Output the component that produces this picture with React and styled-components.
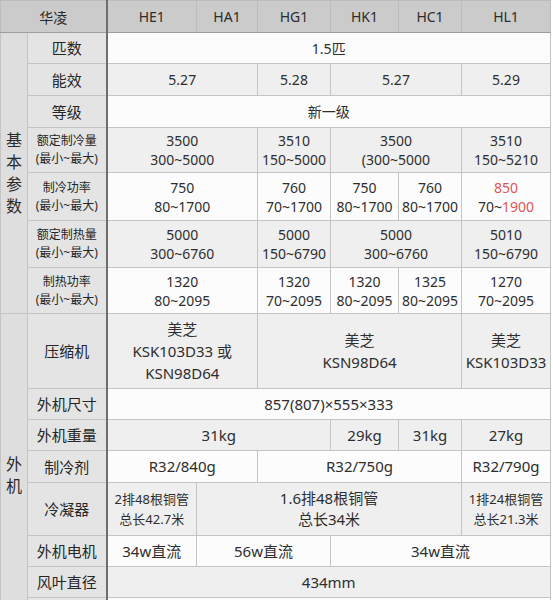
import React from 'react';
import styled, {createGlobalStyle} from 'styled-components';

const GlobalStyle = createGlobalStyle`
  html, body {
    margin: 0;
    padding: 0;
    background: #ffffff;
    overflow: hidden;
  }
  body {
    font-family: "Noto Sans", "Noto Sans CJK SC", sans-serif;
    color: #2a2a2a;
  }
`;

const SpecTable = styled.table`
  border-collapse: collapse;
  table-layout: fixed;
  width: 551px;
  border-right: 1px solid #b9b9b9;
`;

const HeadCell = styled.th`
  background: #cbcbcb;
  font-weight: 400;
  font-size: 14px;
  color: #2c2c2c;
  text-align: center;
  border: 1px solid #bdbdbd;
  border-bottom: 1px solid #9d9d9d;
  border-right: ${p => p.$divider ? '2px solid #6e6e6e' : '1px solid #bdbdbd'};
  padding: 0;
`;

const GroupCell = styled.td`
  background: #dedede;
  border: 1px solid #c4c4c4;
  font-size: 16px;
  line-height: 22px;
  text-align: center;
  vertical-align: middle;
  padding: 0 5px;
  color: #2a2a2a;
`;

const LabelCell = styled.td`
  background: #e4e4e4;
  border: 1px solid #c4c4c4;
  border-right: 2px solid #6e6e6e;
  text-align: center;
  font-size: ${p => p.$small ? '12px' : '15px'};
  line-height: ${p => p.$small ? '18px' : '20px'};
  padding: 0;
  color: #262626;
`;

const DataCell = styled.td`
  background: ${p => p.$shade ? '#efefef' : '#fcfcfc'};
  border: 1px solid #c4c4c4;
  text-align: center;
  font-size: ${p => p.$size || 14}px;
  line-height: ${p => p.$lh || 19}px;
  padding: 0;
  color: #2e2e2e;
`;

const Red = styled.span`
  color: #e25555;
`;

const cols = [27, 79, 90, 61, 73, 68, 63, 89];
const models = ['HE1', 'HA1', 'HG1', 'HK1', 'HC1', 'HL1'];

const pair = (a, b) => <>{a}<br/>{b}</>;

const basicRows = [
    {label: '匹数', h: 31, cells: [{t: '1.5匹', s: 6}]},
    {label: '能效', h: 32, cells: [{t: '5.27', s: 2}, {t: '5.28'}, {t: '5.27', s: 2}, {t: '5.29'}]},
    {label: '等级', h: 32, cells: [{t: '新一级', s: 6}]},
    {label: pair('额定制冷量', '(最小~最大)'), small: true, h: 45, cells: [
        {t: pair('3500', '300~5000'), s: 2}, {t: pair('3510', '150~5000')},
        {t: pair('3500', '(300~5000'), s: 2}, {t: pair('3510', '150~5210')}]},
    {label: pair('制冷功率', '(最小~最大)'), small: true, h: 48, cells: [
        {t: pair('750', '80~1700'), s: 2}, {t: pair('760', '70~1700')}, {t: pair('750', '80~1700')},
        {t: pair('760', '80~1700')}, {t: pair(<Red>850</Red>, <>70~<Red>1900</Red></>)}]},
    {label: pair('额定制热量', '(最小~最大)'), small: true, h: 47, cells: [
        {t: pair('5000', '300~6760'), s: 2}, {t: pair('5000', '150~6790')},
        {t: pair('5000', '300~6760'), s: 2}, {t: pair('5010', '150~6790')}]},
    {label: pair('制热功率', '(最小~最大)'), small: true, h: 46, cells: [
        {t: pair('1320', '80~2095'), s: 2}, {t: pair('1320', '70~2095')}, {t: pair('1320', '80~2095')},
        {t: pair('1325', '80~2095')}, {t: pair('1270', '70~2095')}]},
];

const outdoorRows = [
    {label: '压缩机', h: 75, size: 15, lh: 22, cells: [
        {t: <>美芝<br/>KSK103D33 或<br/>KSN98D64</>, s: 2},
        {t: pair('美芝', 'KSN98D64'), s: 3}, {t: pair('美芝', 'KSK103D33')}]},
    {label: '外机尺寸', h: 31, size: 15, cells: [{t: '857(807)×555×333', s: 6}]},
    {label: '外机重量', h: 31, size: 15, cells: [{t: '31kg', s: 3}, {t: '29kg'}, {t: '31kg'}, {t: '27kg'}]},
    {label: '制冷剂', h: 32, size: 15, cells: [{t: 'R32/840g', s: 2}, {t: 'R32/750g', s: 3}, {t: 'R32/790g'}]},
    {label: '冷凝器', h: 53, size: 13, lh: 20, cells: [
        {t: pair('2排48根铜管', '总长42.7米')}, {t: pair('1.6排48根铜管', '总长34米'), s: 4, size: 15, lh: 21},
        {t: pair('1排24根铜管', '总长21.3米')}]},
    {label: '外机电机', h: 31, size: 15, cells: [{t: '34w直流'}, {t: '56w直流', s: 2}, {t: '34w直流', s: 3}]},
    {label: '风叶直径', h: 31, size: 15, cells: [{t: '434mm', s: 6}]},
    {label: '', h: 38, size: 15, cells: [{t: '', s: 6}]},
];

const renderCells = (row, shade) => row.cells.map((c, i) => (
    <DataCell key={i} colSpan={c.s || 1} $shade={shade} $size={c.size || row.size} $lh={c.lh || row.lh}>
        {c.t}
    </DataCell>
));

const App = () => {
    let stripe = 0;
    const shadeNext = () => stripe++ % 2 === 1;

    return (
        <>
            <GlobalStyle/>
            <SpecTable>
                <colgroup>
                    {cols.map((w, i) => <col key={i} style={{width: w}}/>)}
                </colgroup>
                <thead>
                <tr style={{height: 32}}>
                    <HeadCell colSpan={2} $divider>华凌</HeadCell>
                    {models.map(m => <HeadCell key={m}>{m}</HeadCell>)}
                </tr>
                </thead>
                <tbody>
                {basicRows.map((row, i) => (
                    <tr key={'b' + i} style={{height: row.h}}>
                        {i === 0 && <GroupCell rowSpan={basicRows.length}>基本参数</GroupCell>}
                        <LabelCell $small={row.small}>{row.label}</LabelCell>
                        {renderCells(row, shadeNext())}
                    </tr>
                ))}
                {outdoorRows.map((row, i) => (
                    <tr key={'o' + i} style={{height: row.h}}>
                        {i === 0 && <GroupCell rowSpan={outdoorRows.length}>外机</GroupCell>}
                        <LabelCell>{row.label}</LabelCell>
                        {renderCells(row, shadeNext())}
                    </tr>
                ))}
                </tbody>
            </SpecTable>
        </>
    );
};

export default App;
